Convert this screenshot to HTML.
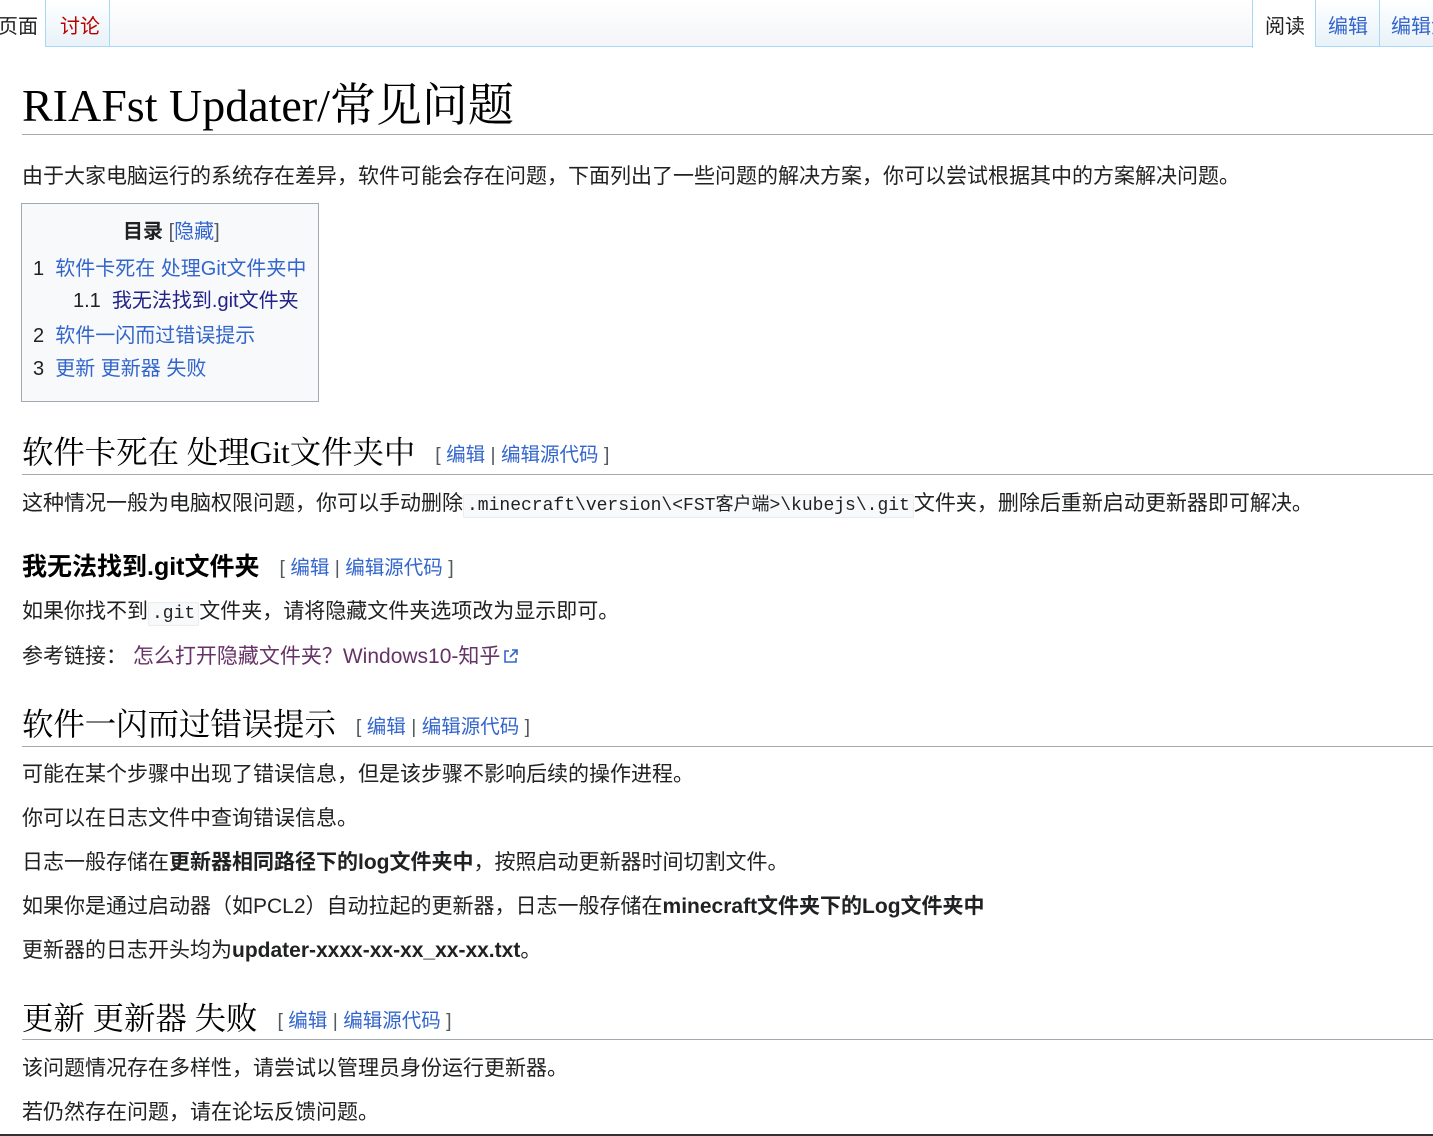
<!DOCTYPE html>
<html><head><meta charset="utf-8">
<style>
*{margin:0;padding:0;box-sizing:border-box}
html,body{width:1433px;height:1136px;overflow:hidden;background:#fff}
body{font-family:"Liberation Sans","Noto Sans CJK SC",sans-serif;color:#202122;position:relative}
.a{position:absolute;white-space:nowrap}
.p{left:22px;font-size:21px;line-height:30px}
.blue{color:#3366cc}
.serif{font-family:"Liberation Serif","Noto Serif CJK SC",serif}
.h2{left:22px;font-size:31.4px;line-height:40px;font-family:"Liberation Serif","Noto Serif CJK SC",serif;color:#000}
.ed{font-family:"Liberation Sans","Noto Sans CJK SC",sans-serif;font-size:19.5px;color:#54595d;margin-left:20px;vertical-align:2px}
.ed a{color:#3366cc;text-decoration:none}
.rule{position:absolute;left:22px;right:0;height:1px;background:#a2a9b1}
code{font-family:"Liberation Mono","Noto Sans CJK SC",monospace;font-size:18px;background:#f8f9fa;border:1px solid #eaecf0;border-radius:2px;padding:1px 3px}
</style></head><body>
<!-- tabs -->
<div class="a" style="left:0;top:0;width:1433px;height:47px;background:linear-gradient(#fff,#f3f5f8)"></div>
<div class="a" style="left:0;top:46px;width:1433px;height:1px;background:#a7d7f9"></div>
<div class="a" style="left:0;top:0;width:45px;height:47px;background:#fff"></div>
<div class="a" style="left:-2px;top:13px;font-size:20px;line-height:28px;color:#202122">页面</div>
<div class="a" style="left:45px;top:0;width:65px;height:47px;background:linear-gradient(#fff,#e8f2f8);border-left:1px solid #a7d7f9;border-right:1px solid #a7d7f9;border-bottom:1px solid #a7d7f9"></div>
<div class="a" style="left:60px;top:13px;font-size:20px;line-height:28px;color:#ba0000">讨论</div>
<div class="a" style="left:1252px;top:0;width:63px;height:48px;background:#fff;border-left:1px solid #a7d7f9"></div>
<div class="a" style="left:1265px;top:13px;font-size:20px;line-height:28px">阅读</div>
<div class="a" style="left:1315px;top:0;width:64px;height:47px;background:linear-gradient(#fff,#e8f2f8);border-left:1px solid #a7d7f9;border-bottom:1px solid #a7d7f9"></div>
<div class="a blue" style="left:1328px;top:13px;font-size:20px;line-height:28px">编辑</div>
<div class="a" style="left:1379px;top:0;width:54px;height:47px;background:linear-gradient(#fff,#e8f2f8);border-left:1px solid #a7d7f9;border-bottom:1px solid #a7d7f9"></div>
<div class="a blue" style="left:1391px;top:13px;font-size:20px;line-height:28px">编辑源</div>

<!-- h1 -->
<div class="a serif" style="left:22px;top:80px;font-size:46px;line-height:52px;color:#000">RIAFst Updater/常见问题</div>
<div class="rule" style="top:134px"></div>
<div class="a p" style="top:162px">由于大家电脑运行的系统存在差异，软件可能会存在问题，下面列出了一些问题的解决方案，你可以尝试根据其中的方案解决问题。</div>

<!-- toc -->
<div class="a" style="left:21px;top:203px;width:298px;height:199px;background:#f8f9fa;border:1px solid #a2a9b1"></div>
<div class="a" style="left:123px;top:219px;font-size:20px;line-height:26px"><b>目录</b> <span style="color:#54595d">[</span><span class="blue">隐藏</span><span style="color:#54595d">]</span></div>
<div class="a" style="left:33px;top:256px;font-size:20px;line-height:26px">1&nbsp; <span class="blue">软件卡死在 处理Git文件夹中</span></div>
<div class="a" style="left:73px;top:288px;font-size:20px;line-height:26px">1.1&nbsp; <span style="color:#222288">我无法找到.git文件夹</span></div>
<div class="a" style="left:33px;top:323px;font-size:20px;line-height:26px">2&nbsp; <span class="blue">软件一闪而过错误提示</span></div>
<div class="a" style="left:33px;top:356px;font-size:20px;line-height:26px">3&nbsp; <span class="blue">更新 更新器 失败</span></div>

<!-- section 1 -->
<div class="a h2" style="top:433px">软件卡死在 处理Git文件夹中<span class="ed">[ <a>编辑</a> | <a>编辑源代码</a> ]</span></div>
<div class="rule" style="top:474px"></div>
<div class="a p" style="top:489px">这种情况一般为电脑权限问题，你可以手动删除<code>.minecraft\version\&lt;FST客户端&gt;\kubejs\.git</code>文件夹，删除后重新启动更新器即可解决。</div>

<div class="a" style="left:22px;top:551px;font-size:25px;line-height:32px;font-weight:bold;color:#000">我无法找到.git文件夹<span class="ed" style="font-weight:normal;vertical-align:1px">[ <a>编辑</a> | <a>编辑源代码</a> ]</span></div>
<div class="a p" style="top:597px">如果你找不到<code>.git</code>文件夹，请将隐藏文件夹选项改为显示即可。</div>
<div class="a p" style="top:642px">参考链接：&nbsp;<span style="color:#663366">怎么打开隐藏文件夹？Windows10-知乎</span><svg width="16" height="16" viewBox="0 0 16 16" style="vertical-align:-1px;margin-left:3px"><path d="M6 3H2v11h11v-4" fill="none" stroke="#3366cc" stroke-width="1.6"/><path d="M9 2h5v5M14 2L7 9" fill="none" stroke="#3366cc" stroke-width="1.6"/></svg></div>

<!-- section 2 -->
<div class="a h2" style="top:705px">软件一闪而过错误提示<span class="ed">[ <a>编辑</a> | <a>编辑源代码</a> ]</span></div>
<div class="rule" style="top:746px"></div>
<div class="a p" style="top:760px">可能在某个步骤中出现了错误信息，但是该步骤不影响后续的操作进程。</div>
<div class="a p" style="top:804px">你可以在日志文件中查询错误信息。</div>
<div class="a p" style="top:848px">日志一般存储在<b>更新器相同路径下的log文件夹中</b>，按照启动更新器时间切割文件。</div>
<div class="a p" style="top:892px">如果你是通过启动器（如PCL2）自动拉起的更新器，日志一般存储在<b>minecraft文件夹下的Log文件夹中</b></div>
<div class="a p" style="top:936px">更新器的日志开头均为<b>updater-xxxx-xx-xx_xx-xx.txt</b>。</div>

<!-- section 3 -->
<div class="a h2" style="top:999px">更新 更新器 失败<span class="ed">[ <a>编辑</a> | <a>编辑源代码</a> ]</span></div>
<div class="rule" style="top:1039px"></div>
<div class="a p" style="top:1054px">该问题情况存在多样性，请尝试以管理员身份运行更新器。</div>
<div class="a p" style="top:1098px">若仍然存在问题，请在论坛反馈问题。</div>

<div class="a" style="left:0;top:1134px;width:1433px;height:2px;background:#333"></div>
</body></html>
